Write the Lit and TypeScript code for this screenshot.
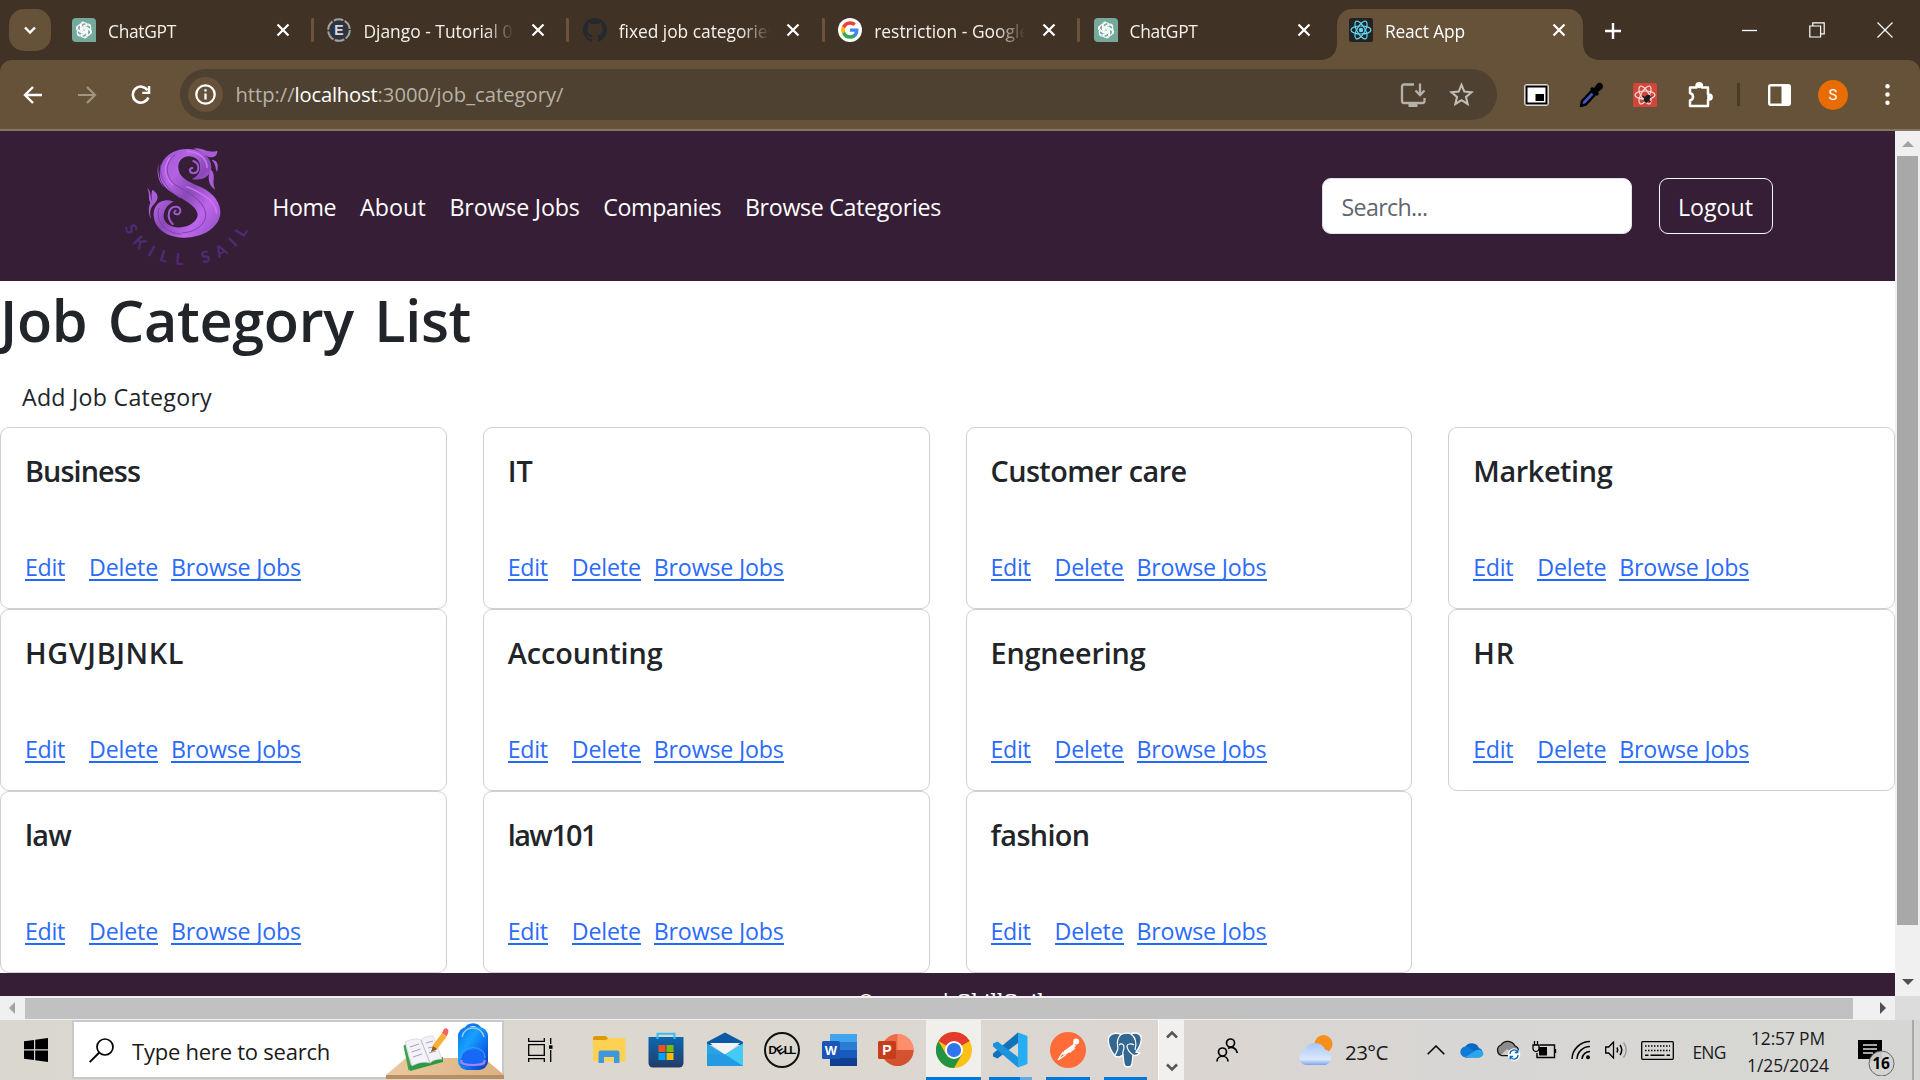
import { LitElement, html, css, svg, nothing } from "lit";
import { customElement, property } from "lit/decorators.js";

/** Text run whose tracking is adjusted so that it fills a given width. */
@customElement("fit-text")
class FitText extends LitElement {
  @property({ type: Number }) w = 0;
  @property() text = "";
  static styles = css`
    :host { display: inline-block; white-space: pre; }
    .run { display: inline-block; white-space: pre; }
  `;
  render() {
    return html`<span class="run">${this.text}</span>`;
  }
  updated() {
    const run = this.renderRoot.querySelector<HTMLElement>(".run")!;
    run.style.letterSpacing = "0px";
    const natural = run.getBoundingClientRect().width;
    run.style.letterSpacing = `${(this.w - natural) / Math.max(1, this.text.length)}px`;
  }
}

const t = (text: string, w: number, cls = "") =>
  html`<fit-text class=${cls} .text=${text} .w=${w}></fit-text>`;

const knot = svg`${[0, 60, 120, 180, 240, 300].map(
  (a) => svg`<path transform="rotate(${a} 12 12)" d="M9 13.8V7.2C9 4 13 2.8 15 5.2M10.6 12.9V8.2l4.4-2.5c1.8-1 4.2.1 4.4 2.3"/>`
)}`;

const gptIcon = html`<svg width="24" height="24" viewBox="0 0 24 24"><path d="M4 0h16a4 4 0 0 1 4 4v20H4a4 4 0 0 1-4-4V4a4 4 0 0 1 4-4z" fill="#74a99b"/><g fill="none" stroke="#fff" stroke-width="1.2" transform="translate(1.2 1.2) scale(.9)">${knot}</g></svg>`;
const djIcon = html`<svg width="24" height="24" viewBox="0 0 24 24"><circle cx="12" cy="12" r="8.5" fill="#2b3344"/><circle cx="12" cy="12" r="10.8" fill="none" stroke="#9ba3ad" stroke-width="2" stroke-dasharray="9.8 1.5"/><text x="12" y="17" text-anchor="middle" font-size="14" font-weight="700" font-family="Liberation Sans, sans-serif" fill="#d6dae0">E</text></svg>`;
const ghIcon = html`<svg width="24" height="24" viewBox="0 0 16 16"><path fill="#24292f" d="M8 0C3.58 0 0 3.58 0 8c0 3.54 2.29 6.53 5.47 7.59.4.07.55-.17.55-.38 0-.19-.01-.82-.01-1.49-2.01.37-2.53-.49-2.69-.94-.09-.23-.48-.94-.82-1.13-.28-.15-.68-.52-.01-.53.63-.01 1.08.58 1.23.82.72 1.21 1.87.87 2.33.66.07-.52.28-.87.51-1.07-1.78-.2-3.64-.89-3.64-3.95 0-.87.31-1.59.82-2.15-.08-.2-.36-1.02.08-2.12 0 0 .67-.21 2.2.82.64-.18 1.32-.27 2-.27s1.36.09 2 .27c1.53-1.04 2.2-.82 2.2-.82.44 1.1.16 1.92.08 2.12.51.56.82 1.27.82 2.15 0 3.07-1.87 3.75-3.65 3.95.29.25.54.73.54 1.48 0 1.07-.01 1.93-.01 2.2 0 .21.15.46.55.38A8.01 8.01 0 0 0 16 8c0-4.42-3.58-8-8-8z"/></svg>`;
const googleIcon = html`<svg width="24" height="24" viewBox="0 0 24 24"><circle cx="12" cy="12" r="12" fill="#fff"/><g transform="translate(2.400 2.400) scale(.8)"><path fill="#4285f4" d="M22.56 12.25c0-.78-.07-1.53-.2-2.25H12v4.26h5.92a5.06 5.06 0 0 1-2.2 3.32v2.77h3.57c2.08-1.92 3.27-4.74 3.27-8.1z"/><path fill="#34a853" d="M12 23c2.97 0 5.46-.98 7.28-2.66l-3.57-2.77c-.98.66-2.23 1.06-3.71 1.06-2.86 0-5.29-1.93-6.16-4.53H2.18v2.84A11 11 0 0 0 12 23z"/><path fill="#fbbc05" d="M5.84 14.09a6.6 6.6 0 0 1 0-4.18V7.07H2.18a11 11 0 0 0 0 9.86l3.66-2.84z"/><path fill="#ea4335" d="M12 5.38c1.62 0 3.06.56 4.21 1.64l3.15-3.15A11 11 0 0 0 2.18 7.07l3.66 2.84C6.71 7.31 9.14 5.38 12 5.38z"/></g></svg>`;
const atom = (c: string) => svg`<g fill="none" stroke="${c}" stroke-width="1.2"><ellipse cx="12" cy="12" rx="10" ry="4"/><ellipse cx="12" cy="12" rx="10" ry="4" transform="rotate(60 12 12)"/><ellipse cx="12" cy="12" rx="10" ry="4" transform="rotate(120 12 12)"/></g>`;
const reactIcon = html`<svg width="24" height="24" viewBox="0 0 24 24"><rect width="24" height="24" rx="2.5" fill="#222"/>${atom("#61dafb")}<circle cx="12" cy="12" r="2.2" fill="#61dafb"/></svg>`;

const closeX = html`<svg width="14" height="14" viewBox="0 0 14 14"><path d="M1.5 1.5l11 11M12.5 1.5l-11 11" stroke="#fff" stroke-width="2.2"/></svg>`;

const TABS = [
  { icon: gptIcon, title: "ChatGPT", w: 68, sep: true },
  { icon: djIcon, title: "Django - Tutorial 0", w: 149, sep: true },
  { icon: ghIcon, title: "fixed job categories", w: 157, sep: true },
  { icon: googleIcon, title: "restriction - Google", w: 155, sep: true },
  { icon: gptIcon, title: "ChatGPT", w: 68, sep: false },
];

const CATEGORIES: [string, number][] = [
  ["Business", 115], ["IT", 25], ["Customer care", 196], ["Marketing", 139],
  ["HGVJBJNKL", 159], ["Accounting", 155], ["Engneering", 155], ["HR", 42],
  ["law", 46], ["law101", 88], ["fashion", 99],
];

const logo = html`<svg class="logo" width="126.7" height="120" viewBox="70 45 380 360">
  <defs>
    <linearGradient id="sg" x1="0" y1="0" x2="1" y2="1"><stop offset="0" stop-color="#9a4fd0"/><stop offset=".3" stop-color="#b463e2"/><stop offset=".5" stop-color="#8a48b8"/><stop offset=".72" stop-color="#bd66ec"/><stop offset="1" stop-color="#8f4bbf"/></linearGradient>
    <path id="arc" d="M76 290 C122 438 388 446 450 286"/>
  </defs>
  <path fill="url(#sg)" d="M262 57C305 57 336 82 335 112C333 140 308 154 276 147C310 138 312 82 270 79C245 78 232 98 237 120C242 148 275 158 305 172C345 192 363 220 362 250C358 295 305 325 250 323C195 322 160 290 162 250C164 220 190 203 222 215C205 222 190 240 192 262C196 290 235 300 268 286C302 268 300 245 275 225C245 200 205 190 188 160C165 115 195 57 262 57Z"/>
  <g fill="none" stroke="#7b42a8" stroke-width="3" stroke-linecap="round">
    <path d="M225 75C192 100 198 145 228 165C262 187 312 208 318 250C320 285 285 307 250 308"/>
    <path d="M178 235C164 280 205 312 245 312M184 105C176 145 205 180 240 203"/>
  </g>
  <g fill="none" stroke="#c873f4" stroke-width="5" stroke-linecap="round">
    <path d="M262 64C300 66 322 86 322 112M262 170C310 190 350 215 350 248"/>
    <path d="M210 84C187 118 200 146 218 164"/>
  </g>
  <g fill="none" stroke="#a657d6" stroke-width="6" stroke-linecap="round">
    <path d="M281 93C302 100 300 128 282 130C268 130 267 114 278 114"/>
    <path d="M219 282C198 262 207 228 230 230C247 232 245 255 230 253C222 252 222 244 228 242"/>
  </g>
  <g fill="#a85cd8">
    <path d="M280 57C305 48 320 72 353 62C354 76 342 86 325 80C308 72 300 60 280 57Z"/>
    <path d="M336 90C352 88 358 105 352 126C346 115 350 104 336 90ZM333 118C352 138 334 150 347 179C326 168 322 142 333 118Z"/>
    <path d="M142 174C156 182 150 200 158 215C154 202 155 188 158 179C180 192 178 210 158 228C150 240 150 252 155 268C145 252 146 232 152 218C144 205 152 190 142 174ZM178 98C172 120 178 150 194 172C176 158 168 122 178 98Z"/>
  </g>
  <text fill="#4f2a72" font-family="Lato, sans-serif" font-weight="900" font-size="48" dy="2"><textPath href="#arc" textLength="452">SKILL SAIL</textPath></text>
</svg>`;

@customElement("app-root")
class AppRoot extends LitElement {
  static styles = css`
    :host { display: block; width: 1920px; height: 1080px; overflow: hidden; font-family: "Open Sans", "Noto Sans", sans-serif; color: #212529; background: #fff; }
    * { box-sizing: border-box; }
    svg { display: block; flex: none; }
    .screen { display: flex; flex-direction: column; height: 1080px; }
    .strip { display: flex; height: 60px; background: #413226; color: #f6f1ea; flex: none; }
    .tabsearch { width: 42px; height: 42px; margin: 9px 8px 0 9px; border-radius: 15px; background: #665139; display: grid; place-items: center; }
    .tab { width: 255.4px; height: 60px; padding-left: 13px; display: flex; align-items: center; font-size: 17.4px; line-height: 24px; }
    .tab .title { width: 151px; margin-left: 12px; height: 25px; padding-top: 1px; overflow: hidden; white-space: pre; -webkit-mask-image: linear-gradient(90deg, #000 122px, transparent 151px); }
    .tab .x { margin-left: 16.5px; }
    .sep { width: 3px; height: 24px; background: #6b5439; margin-left: 21.5px; border-radius: 1px; }
    .active { position: relative; width: 246px; height: 51px; margin: 9px 0 0 1px; padding: 0 0 9px 12px; border-radius: 15px 15px 0 0; background: #665139; color: #fff; }
    .active::before, .active::after { content: ""; position: absolute; bottom: 0; width: 15px; height: 15px; }
    .active::before { left: -15px; background: radial-gradient(circle at 0 0, transparent 14.5px, #665139 15px); }
    .active::after { right: -15px; background: radial-gradient(circle at 100% 0, transparent 14.5px, #665139 15px); }
    .plus { margin: 22.5px 0 0 22px; }
    .win { display: grid; grid-template-columns: 67px 68px 68px; margin-left: auto; width: 203px; height: 60px; place-items: center; margin-right: 1.5px; }
    .barwrap { background: #413226; height: 71px; flex: none; }
    .toolbar { display: flex; align-items: center; height: 71px; background: #665139; border-bottom: 2px solid #857661; border-radius: 12px 12px 0 0; padding-left: 15px; }
    .navbtns { display: grid; grid-template-columns: repeat(3, 36px); column-gap: 18px; place-items: center; width: 144px; margin-right: 21px; }
    .omni { width: 1317px; height: 51px; border-radius: 26px; background: #4f4131; display: flex; align-items: center; padding-left: 8px; font-size: 20.2px; line-height: 30px; color: #b9b1a6; }
    .info { width: 35px; height: 35px; border-radius: 50%; background: #665139; display: grid; place-items: center; margin-right: 12.5px; }
    .url { display: flex; padding-bottom: 2px; }
    .host { color: #fff; }
    .omni .act { margin-left: auto; display: flex; gap: 23px; margin-right: 23px; align-items: center; }
    .exts { display: grid; grid-template-columns: 55px 54px 54px 55px 23px 59px 48px 60px; margin-left: 12px; place-items: center; }
    .avatar { width: 30px; height: 30px; border-radius: 50%; background: #e86c00; color: #fff; display: grid; place-items: center; font: 15px/30px Roboto, sans-serif; }
    .vline { width: 3px; height: 23px; background: #4a3a29; }

    .view { display: grid; grid-template-columns: 1895px 25px; grid-template-rows: 865px 24px; flex: none; }
    .page { overflow: hidden; height: 865px; display: flex; flex-direction: column; background: #fff; }
    .header { background: #361e37; height: 150px; flex: none; display: flex; align-items: center; padding: 0 122px 0 123px; font-size: 23.2px; line-height: 36px; color: #fff; }
    .logo { margin: -2px 22.5px 0 0; height: 120px; overflow: visible; }
    .menu { display: flex; gap: 23.7px; padding-top: 1px; }
    .search { margin-left: auto; width: 310px; height: 56px; border-radius: 9px; background: #fff; border: 1px solid #dee2e6; color: #5f666d; padding: 10px 0 0 18.5px; }
    .logout { margin-left: 27px; width: 114px; height: 56px; border: 1.5px solid #f8f9fa; border-radius: 9px; padding: 10px 0 0 18px; }
    .h1 { margin: 0; height: 86px; line-height: 78px; font-size: 57.6px; font-weight: 600; word-spacing: 6px; flex: none; }
    .add { height: 60px; padding: 12px 0 0 22px; font-size: 23.2px; line-height: 36px; flex: none; }
    .cards { display: grid; grid-template-columns: repeat(4, 446.75px); column-gap: 36px; flex: none; grid-auto-rows: 182px; }
    .card { border: 1.5px solid #d0d0d1; border-radius: 9px; padding: 25px 24px; display: flex; flex-direction: column; }
    .card .name { font-size: 28.8px; line-height: 36px; font-weight: 600; height: 36px; }
    .card .links { margin-top: 60px; display: flex; font-size: 23.2px; line-height: 36px; color: #2a6bfb; }
    .lnk { height: 31.5px; border-bottom: 2px solid #1f6bfd; white-space: pre; }
    .lnk.e { width: 40px; margin-right: 24px; }
    .lnk.d { width: 69px; margin-right: 13px; }
    .lnk.b { width: 130px; }
    .foot { background: #361e37; color: #fff; height: 60px; flex: none; padding: 15px 0 0 855px; font: 22px/30px "DejaVu Serif", serif; display: flex; align-items: baseline; }
    .foot .yr { font-size: 14px; width: 59px; margin-left: 6px; letter-spacing: 4px; }
    .foot .bar { margin-right: 7px; }
    .vbar { background: #f0f0f0; display: flex; flex-direction: column; align-items: center; padding: 10px 0 11px; }
    .vthumb { width: 21px; height: 769px; background: #a8a8a8; margin-top: 9px; margin-bottom: auto; }
    .hbar { background: #f0f0f0; display: flex; align-items: center; padding: 0 9px; }
    .hthumb { width: 1828px; height: 21px; background: #c1c1c1; margin: 0 auto 0 10px; }
    .corner { background: #dcdcdc; }

    .task { height: 60px; flex: none; display: flex; background: linear-gradient(90deg, #dad7cf 0, #dcd8d0 45%, #dad5d1 62%, #d8d6d4 75%, #d6d7d4 100%); color: #1a1a1a; }
    .start { width: 72px; height: 60px; display: grid; place-items: center; }
    .find { width: 432px; height: 59px; border: 2px solid #c8c9cc; background: #fff; display: flex; font-size: 22px; line-height: 30px; }
    .find .mag { margin: 16px 0 0 15px; }
    .find fit-text { margin: 13.5px 0 0 18px; width: 198px; }
    .find .art { margin: 0 -2px 0 auto; }
    .view-btn { width: 72px; margin-right: 4px; display: grid; place-items: center; }
    .apps { display: grid; grid-template-columns: repeat(10, 57.4px); width: 578px; }
    .app { height: 60px; display: grid; place-items: center; position: relative; }
    .app.nudge { padding-left: 3px; }
    .app.run::after { content: ""; position: absolute; bottom: 0; left: 7px; right: 7px; height: 3px; background: #0078d7; }
    .app.on { background: #f1efec; margin: 0 1px 0 2px; }
    .app.on::after { left: 0; right: 0; }
    .app.two::after { background: linear-gradient(90deg, #0078d7 31px, #63aae5 31px); }
    .scroll { width: 26px; background: #f1f0ef; display: flex; flex-direction: column; justify-content: space-between; align-items: center; padding: 10px 0 8px; border-left: 1px solid #fff; }
    .tray { display: grid; grid-template-columns: 86px 75px 73px 36px 36px 36px 36px 38px 33px 49px 54px 104px 72px 8px; place-items: center; height: 60px; }
    .weather { justify-self: end; margin-right: 11px; }
    .temp { font-size: 20.5px; line-height: 30px; padding-top: 3px; justify-self: start; }
    .eng { font-size: 17.4px; line-height: 24px; padding-top: 3px; }
    .clock { font-size: 17.4px; line-height: 27.5px; display: flex; flex-direction: column; align-items: center; padding-top: 4px; }
    .note { justify-self: start; margin-left: 18px; margin-top: 16px; }
    .edge { width: 2px; height: 60px; background: #a9a9a6; justify-self: start; }
  `;

  private tab(x: (typeof TABS)[number]) {
    return html`<div class="tab">${x.icon}<div class="title">${t(x.title, x.w)}</div><div class="x">${closeX}</div>${x.sep ? html`<div class="sep"></div>` : nothing}</div>`;
  }

  private browser() {
    return html`
      <div class="strip">
        <div class="tabsearch"><svg width="14" height="14" viewBox="0 0 14 14"><path d="M2 4.5l5 5 5-5" fill="none" stroke="#fff" stroke-width="2.4"/></svg></div>
        ${TABS.map((x) => this.tab(x))}
        <div class="tab active">${reactIcon}<div class="title">${t("React App", 80)}</div><div class="x">${closeX}</div></div>
        <svg class="plus" width="16" height="16" viewBox="0 0 16 16"><path d="M8 0v16M0 8h16" stroke="#fff" stroke-width="2.4"/></svg>
        <div class="win">
          <svg width="15" height="15" viewBox="0 0 15 15"><path d="M0 7.5h15" stroke="#fff" stroke-width="1.3"/></svg>
          <svg width="16" height="16" viewBox="0 0 16 16"><path d="M.8 4h10.8v11H.8zM3.8 4V.8h11.4v11h-3.6" fill="none" stroke="#fff" stroke-width="1.2"/></svg>
          <svg width="16" height="16" viewBox="0 0 16 16"><path d="M.5 .5l15 15M15.500 .5l-15 15" stroke="#fff" stroke-width="1.2"/></svg>
        </div>
      </div>
      <div class="barwrap"><div class="toolbar">
        <div class="navbtns">
          <svg width="20" height="20" viewBox="0 0 20 20"><path d="M19 10H2.500M10 2L2 10l8 8" fill="none" stroke="#fff" stroke-width="2.4"/></svg>
          <svg width="20" height="20" viewBox="0 0 20 20"><path d="M1 10h16.500M10 2l8 8-8 8" fill="none" stroke="#a2947f" stroke-width="2.2"/></svg>
          <svg width="20" height="20" viewBox="0 0 20 20"><path d="M17.300 12.500A8 8 0 1 1 16.500 5.200" fill="none" stroke="#fff" stroke-width="2.500"/><path d="M19.300 1v8h-8l0-2.300h5.500V1z" fill="#fff"/></svg>
        </div>
        <div class="omni">
          <div class="info"><svg width="21" height="21" viewBox="0 0 21 21"><circle cx="10.500" cy="10.500" r="9.200" fill="none" stroke="#fff" stroke-width="2.300"/><path d="M10.500 9.500v6M10.500 5.300v2.300" stroke="#fff" stroke-width="2.300"/></svg></div>
          <div class="url">${t("http://", 59)}${t("localhost", 83, "host")}${t(":3000/job_category/", 186)}</div>
          <div class="act">
            <svg width="26" height="26" viewBox="0 0 26 26"><path d="M14 2.500H4A2 2 0 0 0 2 4.500v14.500a2 2 0 0 0 2 2h18.500a2 2 0 0 0 2-2v-3" fill="none" stroke="#b4b0aa" stroke-width="2.300"/><path d="M8.500 21h9v4h-9z" fill="#b4b0aa"/><path d="M20 1.500v11M15.500 8.500l4.500 4.500 4.500-4.500" fill="none" stroke="#b4b0aa" stroke-width="2.300"/></svg>
            <svg width="25" height="25" viewBox="0 0 24 24"><path d="M12 2.800l2.700 6.400 6.900.6-5.300 4.500 1.600 6.800-5.900-3.600-5.900 3.600 1.600-6.800-5.300-4.500 6.900-.6z" fill="none" stroke="#c3beb8" stroke-width="2"/></svg>
          </div>
        </div>
        <div class="exts">
          <svg width="25" height="22" viewBox="0 0 25 22"><rect x=".6" y=".6" width="23.800" height="20.800" rx="2" fill="#fff" stroke="#ddd"/><rect x="2.500" y="2.500" width="20" height="17" fill="none" stroke="#000" stroke-width="2"/><rect x="11.500" y="10" width="8.500" height="7" fill="#000"/></svg>
          <svg width="24" height="25" viewBox="0 0 24 25"><path d="M2 24l1-5L12.500 9l3.500 3.500L7 22.500z" fill="#3e57c4" stroke="#000" stroke-width="2.400"/><path d="M11 7l2-2 2 1 3-4c2-2 4-1 5 0s1.500 3 0 5l-4 3 1 2-2 2z" fill="#000"/></svg>
          <svg width="24" height="24" viewBox="0 0 24 24"><rect width="24" height="24" rx="1.500" fill="#d1453b"/>${atom("#f7dcd8")}<g stroke="#1c1c1c" stroke-width="1.200"><ellipse cx="14" cy="15.500" rx="2" ry="3.400" transform="rotate(35 14 15.500)" fill="#1c1c1c"/><path d="M9.500 13l8 6M10.500 18l8-4.500M13 20l3.500-8"/></g></svg>
          <svg width="26" height="26" viewBox="0 0 26 26"><path d="M3 5.500h6.500V4a2.700 2.700 0 0 1 5.400 0v1.500H21v7h1a2.600 2.600 0 0 1 0 5.200h-1V24H3v-5.500c4-1 4-6.500 0-7.500z" fill="none" stroke="#fff" stroke-width="2.500" stroke-linejoin="round"/><circle cx="12.200" cy="3.600" r="2.600" fill="#fff"/><circle cx="22.700" cy="15" r="2.600" fill="#fff"/></svg>
          <div class="vline"></div>
          <svg width="23" height="22" viewBox="0 0 23 22"><rect x="1.200" y="1.200" width="20.600" height="19.600" rx="1.500" fill="none" stroke="#fff" stroke-width="2.400"/><path d="M13.500 1h8v20h-8z" fill="#fff"/></svg>
          <div class="avatar">S</div>
          <svg width="5" height="21" viewBox="0 0 5 21"><g fill="#fff"><circle cx="2.500" cy="2.300" r="2.200"/><circle cx="2.500" cy="10.500" r="2.200"/><circle cx="2.500" cy="18.700" r="2.200"/></g></svg>
        </div>
      </div></div>`;
  }

  private site() {
    return html`<div class="view">
      <div class="page">
        <div class="header">
          ${logo}
          <div class="menu">${t("Home", 64)}${t("About", 66)}${t("Browse Jobs", 130)}${t("Companies", 118)}${t("Browse Categories", 196)}</div>
          <div class="search">${t("Search...", 86)}</div>
          <div class="logout">${t("Logout", 75)}</div>
        </div>
        <h1 class="h1">${t("Job Category List", 471)}</h1>
        <div class="add">${t("Add Job Category", 190)}</div>
        <div class="cards">
          ${CATEGORIES.map(([name, w]) => html`<div class="card">
            <div class="name">${t(name, w)}</div>
            <div class="links"><div class="lnk e">${t("Edit", 40)}</div><div class="lnk d">${t("Delete", 69)}</div><div class="lnk b">${t("Browse Jobs", 130)}</div></div>
          </div>`)}
        </div>
        <div class="foot"><span>©</span><span class="yr">2024</span><span class="bar">|</span>${t("SkillSail", 87)}</div>
      </div>
      <div class="vbar">
        <svg width="12" height="6" viewBox="0 0 12 6"><path d="M0 6l6-6 6 6z" fill="#a3a3a3"/></svg>
        <div class="vthumb"></div>
        <svg width="12" height="6" viewBox="0 0 12 6"><path d="M0 0l6 6 6-6z" fill="#505050"/></svg>
      </div>
      <div class="hbar">
        <svg width="6" height="12" viewBox="0 0 6 12"><path d="M6 0L0 6l6 6z" fill="#a3a3a3"/></svg>
        <div class="hthumb"></div>
        <svg width="6" height="12" viewBox="0 0 6 12"><path d="M0 0l6 6-6 6z" fill="#505050"/></svg>
      </div>
      <div class="corner"></div>
    </div>`;
  }

  private taskbar() {
    return html`<div class="task">
      <div class="start"><svg width="24" height="24" viewBox="0 0 24 24"><path d="M0 3.300L10 2v9.300H0zM11.200 1.800L24 0v11.300H11.200zM0 12.500h10V22L0 20.700zM11.200 12.500H24V24l-12.800-1.800z"/></svg></div>
      <div class="find">
        <svg class="mag" width="25" height="25" viewBox="0 0 25 25"><circle cx="16" cy="9" r="8" fill="none" stroke="#000" stroke-width="1.700"/><path d="M10.300 14.500L.7 24.200" stroke="#000" stroke-width="1.900"/></svg>
        ${t("Type here to search", 198)}
        <svg class="art" width="118" height="57" viewBox="0 0 118 57">
          <defs>
            <linearGradient id="bp" x1="0" y1="0" x2="1" y2="1"><stop offset="0" stop-color="#0b6be8"/><stop offset=".35" stop-color="#16a2ff"/><stop offset=".75" stop-color="#0a5de8"/><stop offset="1" stop-color="#0b3c9c"/></linearGradient>
            <linearGradient id="ds" x1="0" y1="0" x2="1" y2="0"><stop offset="0" stop-color="#eac9a0"/><stop offset="1" stop-color="#dbb182"/></linearGradient>
          </defs>
          <path d="M20 36H98L118 53H0z" fill="url(#ds)"/><path d="M0 53h118v4H0z" fill="#b98e62"/>
          <path d="M17.500 24l2-2 6 24-3 2.500z" fill="#3aa64a"/><path d="M23 43.500l34-8.500v5l-33 9z" fill="#2c9a42"/>
          <path d="M19 20c6-3 12-4 16-2 3-3 8-4 12-4l9 23c-5 0-9 1-12 4-6-2-13 0-18 3z" fill="#f3f2f8" stroke="#cfcde0" stroke-width=".7"/><path d="M35 18l9 23" stroke="#b8b6cf"/>
          <path d="M24 25l9-3M25.500 30l9-3M27 35l9-3M40 21l7-2M42 26l5-1M43 31l7-2" stroke="#9a98b5" stroke-width=".9"/>
          <path d="M45 30l2-7L56 11l4.500 4-10 13z" fill="#fbb034"/><path d="M56 11l2-4c1.500-1.500 3-.5 4 .5s0 4.500-1.500 7z" fill="#f4665c"/><path d="M45 30l2-6 4 3z" fill="#8a5a30"/>
          <path d="M80 8c0-7 14-7 14 0" fill="none" stroke="#1279e8" stroke-width="3"/>
          <rect x="72" y="5" width="30" height="43" rx="9" fill="url(#bp)"/><path d="M76 15c2-12 20-12 22 0" fill="none" stroke="#9ccaff" stroke-width="1.400"/>
          <path d="M75 41V38c0-14 24-14 24 0v3c0 3-2 3-4 3H79c-2 0-4 0-4-3z" fill="#1768f5"/><path d="M75.500 38v2c0 4 23 4 23 0v-2" fill="none" stroke="#a884f5" stroke-width="2.200"/><path d="M75 36c0-14 24-14 24 0" fill="none" stroke="#3f98ff" stroke-width="1.200"/>
        </svg>
      </div>
      <div class="view-btn"><svg width="25" height="24" viewBox="0 0 25 24"><path d="M.7 0v3.300h15.600V0M.7 6.700h15.600v10.600H.7zM.7 24v-3.300h15.600V24M22.700 0v6M22.700 12v12" fill="none" stroke="#000" stroke-width="1.300"/><path d="M21 7.300h3.500v3.500H21z"/></svg></div>
      <div class="apps">
        <div class="app"><svg width="34" height="30" viewBox="0 0 34 30"><path d="M1 3a2 2 0 0 1 2-2h11l3 4H1z" fill="#dd9a08"/><path d="M1 5h13l3-2h15a1.500 1.500 0 0 1 1.500 1.500V25a1.500 1.500 0 0 1-1.500 1.500H2.500A1.500 1.500 0 0 1 1 25z" fill="#ffd152"/><path d="M6.500 28V17.500a2 2 0 0 1 2-2h17a2 2 0 0 1 2 2V28H22v-6H12v6z" fill="#3f97dc"/></svg></div>
        <div class="app"><svg width="36" height="36" viewBox="0 0 36 36"><defs><linearGradient id="st" x1="0" y1="0" x2="0" y2="1"><stop offset="0" stop-color="#0a69b4"/><stop offset="1" stop-color="#243b66"/></linearGradient></defs><path d="M.5 5h35v26a4.500 4.500 0 0 1-4.500 4.500H5A4.500 4.500 0 0 1 .5 31z" fill="url(#st)"/><path d="M9.500 7V1.700h17V7" fill="none" stroke="#35c0ee" stroke-width="2"/><path d="M10.500 13h7v7h-7z" fill="#f25022"/><path d="M18.500 13h7v7h-7z" fill="#7fba00"/><path d="M10.500 21h7v7h-7z" fill="#00a4ef"/><path d="M18.500 21h7v7h-7z" fill="#ffb900"/></svg></div>
        <div class="app nudge"><svg width="36" height="36" viewBox="0 0 36 36"><path d="M0 10L18 .5 36 10v3H0z" fill="#0b5aa5"/><path d="M3 11h30L18 23z" fill="#f3f3f3"/><path d="M0 11.500L18 22.500 36 11.500V34H0z" fill="#2aa3e6"/><path d="M36 11.500V34L18 22.500z" fill="#43cbf5"/><path d="M0 34V22L18 22.500 36 34z" fill="#2196e0" fill-opacity=".7"/></svg></div>
        <div class="app nudge"><svg width="36" height="36" viewBox="0 0 36 36"><circle cx="18" cy="18" r="17" fill="none" stroke="#111" stroke-width="2"/><g font-family="Liberation Sans, sans-serif" font-weight="700" font-size="11.500"><text x="4.500" y="22">D</text><text x="12.500" y="22" transform="rotate(-35 16.500 18)">E</text><text x="19.800" y="22" textLength="12.500">LL</text></g></svg></div>
        <div class="app nudge"><svg width="36" height="34" viewBox="0 0 36 34"><path d="M8 1h27v8H8z" fill="#41a5ee"/><path d="M8 9h27v8H8z" fill="#2b7cd3"/><path d="M8 17h27v8H8z" fill="#185abd"/><path d="M8 25h27v8H8z" fill="#103f91"/><rect y="8" width="18" height="18" rx="1.500" fill="#1b55b8"/><text x="9" y="21.500" text-anchor="middle" font-family="Liberation Sans, sans-serif" font-weight="700" font-size="13" fill="#fff">W</text></svg></div>
        <div class="app"><svg width="36" height="34" viewBox="0 0 36 34"><circle cx="19.500" cy="17" r="16" fill="#ed6c47"/><path d="M19.500 1a16 16 0 0 1 16 16h-16z" fill="#ff8f6b"/><path d="M35.500 17a16 16 0 0 1-32 0z" fill="#d35230"/><rect y="8" width="18" height="18" rx="1.500" fill="#c43e1c"/><text x="9" y="21.800" text-anchor="middle" font-family="Liberation Sans, sans-serif" font-weight="700" font-size="14" fill="#fff">P</text></svg></div>
        <div class="app run on"><svg width="36" height="36" viewBox="0 0 48 48"><circle cx="24" cy="24" r="24" fill="#fbc116"/><path d="M24 24L3.200 12A24 24 0 0 1 44.800 12z" fill="#e33b2e"/><path d="M3.200 12A24 24 0 0 0 24 48L34.400 30 24 24 13.600 30z" fill="#229342"/><path d="M24 12h20.800" stroke="#e33b2e" stroke-width=".5"/><circle cx="24" cy="24" r="12" fill="#fff"/><circle cx="24" cy="24" r="9.500" fill="#2f76ee"/></svg></div>
        <div class="app run two"><svg width="36" height="36" viewBox="0 0 36 36"><path d="M26 .5V11L5.500 26.500 1 24.500v-3z" fill="#1272b8"/><path d="M26 35.500V25L5.500 9.500 1 11.500v3z" fill="#1c93dc"/><path d="M26 .5L35.500 4v28L26 35.500z" fill="#27adf3"/></svg></div>
        <div class="app run"><svg width="36" height="36" viewBox="0 0 36 36"><circle cx="18" cy="18" r="18" fill="#ff6c37"/><circle cx="26.200" cy="9.500" r="3" fill="#fff"/><path d="M24 11l2 3-9 8-5 1 2-4z" fill="#fff"/><path d="M13 20L8 28l8-5.500M14 19l6 1 5-4" fill="none" stroke="#fff" stroke-width="1.300"/><path d="M14 18l9-6" stroke="#ff6c37" stroke-width=".8"/></svg></div>
        <div class="app run"><svg width="36" height="36" viewBox="0 0 36 36"><path d="M8 24C3 18 0 10 2 5 5 0 11 1 14 2.500 18 1 22 1 24 2c4-2 9-1 10 3 1 5-2 11-5 15l4 1c-2 2-5 3-7 2l-1 9c-1 4-7 4-8 0l-1-9-4 2c-2 0-3 0-4-1z" fill="#336791" stroke="#fff" stroke-width="1.300"/><path d="M14 2.500c-4 3-4 9-3 14-1 3-2 5-3 7M24 2c4 3 6 9 4 16M12 13c2-2 5-1 5 2s-2 5-1 8M20 14c0-2 4-3 7-1M20 14c0 4 2 6 6 9" fill="none" stroke="#fff" stroke-width="1.200"/></svg></div>
      </div>
      <div class="scroll">
        <svg width="12" height="9" viewBox="0 0 12 9"><path d="M1 7.500l5-5 5 5" fill="none" stroke="#555" stroke-width="2.500"/></svg>
        <svg width="12" height="9" viewBox="0 0 12 9"><path d="M1 1.500l5 5 5-5" fill="none" stroke="#555" stroke-width="2.500"/></svg>
      </div>
      <div class="tray">
        <svg width="22" height="24" viewBox="0 0 22 24"><g fill="none" stroke="#000" stroke-width="1.700"><circle cx="14.500" cy="5" r="4"/><circle cx="6.500" cy="14" r="4"/><path d="M1 23.500c0-7 11-7 11 0M12 10.500c4-2.500 9 0 9.200 4.500"/></g></svg>
        <svg class="weather" width="37" height="32" viewBox="0 0 37 32"><defs><linearGradient id="cl" x1="0" y1="0" x2="0" y2="1"><stop offset="0" stop-color="#a9c6f8"/><stop offset=".75" stop-color="#dbe8fb"/><stop offset="1" stop-color="#7ba3f0"/></linearGradient></defs><circle cx="26.500" cy="10" r="9" fill="#f78f1e"/><path d="M8.500 31a8 8 0 0 1-.5-15.500 11 11 0 0 1 20 0 8 8 0 0 1 .5 15.500z" fill="url(#cl)"/></svg>
        <div class="temp">${t("23°C", 43)}</div>
        <svg width="18" height="10" viewBox="0 0 18 10"><path d="M.7 9.300L9 1l8.300 8.300" fill="none" stroke="#000" stroke-width="1.500"/></svg>
        <svg width="24" height="16" viewBox="0 0 24 16"><path d="M6 15.500A5.500 5.500 0 0 1 5 5a8 8 0 0 1 14 1 5 5 0 0 1 0 9.500z" fill="#0b67c2"/><path d="M6 15.500a5.500 5.500 0 1 1 3-10L21 14z" fill="#0f7bd6"/><path d="M5 15.300l11-7c6-3 11 5 4 7.200z" fill="#28a8ea"/></svg>
        <svg width="25" height="21" viewBox="0 0 25 21"><path d="M6 15.500A5.500 5.500 0 0 1 5 5a8 8 0 0 1 14 1 5 5 0 0 1 0 9.500z" fill="#8c8c8c" stroke="#111" stroke-width="1.300"/><path d="M5 15l6-6 7 6z" fill="#ccc"/><circle cx="18" cy="14.500" r="6.300" fill="#fff"/><path d="M14 14a4 4 0 0 1 7.500-2M22 15a4 4 0 0 1-7.500 2M21.800 9.500v3h-3M14.200 19.500v-3h3" fill="none" stroke="#0b6bc2" stroke-width="1.300"/></svg>
        <svg width="25" height="18" viewBox="0 0 25 18"><path d="M8 4h14.500v12.500H5V12M23.500 8v4" fill="none" stroke="#000" stroke-width="1.400"/><path d="M7 6h8v8.500H7z"/><path d="M1 4h6v3.500a3 3 0 0 1-6 0zM2.500 4V0M5.500 4V0" fill="#dbd8d5" stroke="#000" stroke-width="1.300"/></svg>
        <svg width="20" height="20" viewBox="0 0 20 20"><path d="M1 19A18 18 0 0 1 19 1.500M6 19A13 13 0 0 1 19 6.500M11 19a8 8 0 0 1 8-7.500" fill="none" stroke="#000" stroke-width="1.500"/><circle cx="17" cy="17.300" r="2"/></svg>
        <svg width="23" height="18" viewBox="0 0 23 18"><path d="M.7 6h3L8.500 1v16L3.700 12h-3z" fill="none" stroke="#000" stroke-width="1.300"/><path d="M12 6.500q1.500 2.500 0 5M15 4q3.500 5 0 10" fill="none" stroke="#000" stroke-width="1.500"/><path d="M18.500 1.500q5.500 7.500 0 15" fill="none" stroke="#999" stroke-width="1.400"/></svg>
        <svg width="33" height="19" viewBox="0 0 33 19"><rect x=".7" y=".7" width="31.600" height="17.600" rx="1" fill="none" stroke="#000" stroke-width="1.300"/><path d="M4 5h25M4 9.500h25" stroke="#000" stroke-width="1.600" stroke-dasharray="1.500 1.500"/><path d="M4 14.200h3.500M9.500 14.200h14M25.500 14.200H29" stroke="#000" stroke-width="1.500"/></svg>
        <div class="eng">${t("ENG", 33)}</div>
        <div class="clock">${t("12:57 PM", 74)}${t("1/25/2024", 82)}</div>
        <svg class="note" width="38" height="36" viewBox="0 0 38 36"><path d="M0 0h24v19h-8l-4 4v-4H0z"/><path d="M5 5h14M5 9h14M5 13h10" stroke="#ddd" stroke-width="1.300"/><circle cx="23.500" cy="23.500" r="12.500" fill="#d5d6d3" fill-opacity=".93" stroke="#666" stroke-width="1"/><text x="23" y="29" text-anchor="middle" font-family="Open Sans, sans-serif" font-size="15.500" font-weight="700">16</text></svg>
        <div class="edge"></div>
      </div>
    </div>`;
  }

  render() {
    return html`<div class="screen">${this.browser()}${this.site()}${this.taskbar()}</div>`;
  }
}
